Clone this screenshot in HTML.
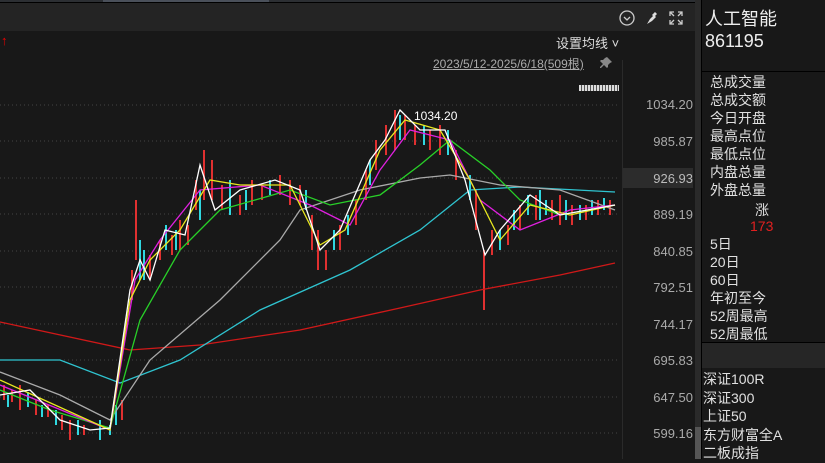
<!DOCTYPE html><html><head><meta charset="utf-8"><style>
body{margin:0;width:825px;height:459px;background:#181818;overflow:hidden;position:relative;font-family:"Liberation Sans","Noto Sans CJK SC",sans-serif;color:#ddd}
.a{position:absolute}
.ax{position:absolute;right:132px;font-size:13px;color:#aaa;text-align:right}
.r{position:absolute;left:710px;font-size:14px;color:#e0e0e0;line-height:18px}
</style></head><body>
<div class="a" style="left:0;top:0;width:695px;height:2px;background:#2c2f33"></div>
<div class="a" style="left:103px;top:0;width:166px;height:2px;background:#4a505a"></div>
<div class="a" style="left:0;top:2px;width:695px;height:1px;background:#000"></div>
<div class="a" style="left:0;top:3px;width:695px;height:28px;background:#242424"></div>
<svg class="a" style="left:618px;top:9px" width="75" height="18" viewBox="0 0 75 18">
<circle cx="9" cy="9" r="7" fill="none" stroke="#ccc" stroke-width="1.3"/><path d="M6 8l3 3 3-3" fill="none" stroke="#ccc" stroke-width="1.3"/>
<path d="M29 15l3-5 4-4 2 2-4 4z" fill="#ddd"/><path d="M34 6l3-3 2 2-3 3z" fill="#ddd"/>
<path d="M52 7V3h4M60 3h4v4M64 11v4h-4M56 15h-4v-4M52 3l4 4M64 3l-4 4M64 15l-4-4M52 15l4-4" fill="none" stroke="#ccc" stroke-width="1.3"/>
</svg>
<div class="a" style="left:556px;top:33px;font-size:13px;color:#ddd">设置均线 ˅</div>
<div class="a" style="left:433px;top:55px;font-size:12px;color:#aaa;text-decoration:underline">2023/5/12-2025/6/18(509根)</div>
<svg class="a" style="left:600px;top:56px" width="13" height="13" viewBox="0 0 13 13"><path d="M7 1l5 5-2 1-2 2 0 2-1 1-3-3-3 3-1 0 0-1 3-3-3-3 1-1 2 0 2-2z" fill="#888"/></svg>
<div class="a" style="left:579px;top:85px;width:40px;height:6px;background:repeating-linear-gradient(90deg,#ddd 0 2px,#555 2px 3px)"></div>
<div class="a" style="left:1px;top:33px;color:#e00;font-size:13px">↑</div>
<div class="a" style="left:622px;top:60px;width:1px;height:399px;background:#2a2a2a"></div>
<div class="a" style="left:623px;top:168px;width:70px;height:20px;background:#2c2c2c"></div>
<div class="ax" style="top:97px">1034.20</div><div class="ax" style="top:134px">985.87</div>
<div class="ax" style="top:171px;color:#bbb">926.93</div><div class="ax" style="top:207px">889.19</div>
<div class="ax" style="top:244px">840.85</div><div class="ax" style="top:280px">792.51</div>
<div class="ax" style="top:317px">744.17</div><div class="ax" style="top:353px">695.83</div>
<div class="ax" style="top:390px">647.50</div><div class="ax" style="top:426px">599.16</div>
<svg class="a" style="left:0;top:0" width="625" height="459">
<g stroke="#444" stroke-dasharray="1 3">
<line x1="0" y1="105" x2="620" y2="105"/><line x1="0" y1="141" x2="620" y2="141"/><line x1="0" y1="178" x2="620" y2="178"/><line x1="0" y1="214" x2="620" y2="214"/><line x1="0" y1="251" x2="620" y2="251"/><line x1="0" y1="287" x2="620" y2="287"/><line x1="0" y1="324" x2="620" y2="324"/><line x1="0" y1="360" x2="620" y2="360"/><line x1="0" y1="397" x2="620" y2="397"/><line x1="0" y1="433" x2="620" y2="433"/></g>
<g stroke-width="2">
<path stroke="#e03030" d="M4 385v15M12 390v12M20 385v25M36 400v15M48 405v12M62 415v15M70 420v20M84 425v10M122 400v20M132 270v30M136 200v60M150 255v25M160 240v20M172 235v20M180 220v30M188 225v20M196 180v30M204 150v50M212 160v40M222 185v25M240 195v20M252 180v25M262 185v15M280 175v20M290 180v25M300 185v20M312 215v35M318 230v40M326 250v20M340 225v25M356 200v25M366 170v30M376 140v30M386 125v30M395 110v40M405 115v25M415 125v20M430 130v20M440 125v30M456 150v30M476 190v40M484 250v60M492 230v25M508 225v20M520 205v25M536 195v25M552 200v20M560 195v30M572 205v20M586 205v15M598 200v15M610 200v15"/>
<path stroke="#30d8e0" d="M8 395v12M28 392v15M42 405v12M56 410v15M78 420v15M100 420v20M110 425v10M116 405v20M140 240v40M144 250v30M166 225v25M176 230v20M200 190v30M230 180v35M246 190v20M270 180v15M306 190v20M334 230v20M348 215v20M370 160v25M400 115v25M424 125v20M448 130v25M470 175v25M500 230v20M514 210v20M528 195v20M540 190v30M546 200v15M566 200v20M580 205v15M592 200v15M604 198v12"/>
</g>
<g fill="none" stroke-width="1.3">
<polyline stroke="#d01818" points="0,322 130,350 200,345 300,330 400,308 480,290 560,275 615,263"/>
<polyline stroke="#2fc4d0" points="0,360 60,360 120,383 180,360 260,310 350,270 420,230 470,190 520,187 615,192"/>
<polyline stroke="#aaa" points="0,372 60,395 110,420 150,360 220,300 280,240 300,210 360,190 420,178 450,175 500,185 560,190 615,210"/>
<polyline stroke="#28d028" points="0,390 50,410 110,428 140,320 180,250 220,210 290,190 330,205 380,195 420,165 450,140 490,170 520,200 560,215 615,205"/>
<polyline stroke="#e020e0" points="0,385 110,430 135,280 160,240 200,190 260,185 310,205 350,225 380,170 410,130 450,140 480,200 520,230 570,210 615,205"/>
<polyline stroke="#e8e820" points="0,380 110,430 130,300 150,260 180,230 210,180 240,185 290,185 320,245 345,230 380,150 405,120 440,130 470,180 500,240 530,205 570,215 615,205"/>
<polyline stroke="#fff" points="0,395 30,390 60,420 90,430 110,428 130,290 140,260 150,280 165,230 185,235 200,165 215,210 240,190 275,180 300,190 320,250 340,230 370,160 385,140 400,110 420,130 445,130 465,180 485,255 500,230 530,195 560,215 615,205"/>
</g>
<text x="414" y="120" fill="#fff" font-size="12" font-family="Liberation Sans">1034.20</text>
</svg>
<div class="a" style="left:695px;top:0;width:6px;height:459px;background:#2a2a2a"></div>
<div class="a" style="left:695px;top:427px;width:6px;height:32px;background:#555"></div>
<div class="a" style="left:701px;top:0;width:124px;height:459px;background:#181818;border-left:1px solid #000"></div>
<div class="a" style="left:705px;top:8px;font-size:18px;line-height:22px;color:#eee">人工智能<br>861195</div>
<div class="a" style="left:702px;top:71px;width:123px;height:1px;background:#000"></div>
<div class="r" style="top:73px">总成交量<br>总成交额<br>今日开盘<br>最高点位<br>最低点位<br>内盘总量<br>外盘总量</div>
<div class="a" style="left:755px;top:200px;font-size:14px;color:#e0e0e0">涨</div>
<div class="a" style="left:750px;top:218px;font-size:14px;color:#e02020">173</div>
<div class="r" style="top:235px">5日<br>20日<br>60日<br>年初至今<br>52周最高<br>52周最低</div>
<div class="a" style="left:702px;top:342px;width:123px;height:1px;background:#000"></div>
<div class="a" style="left:702px;top:343px;width:123px;height:25px;background:#262626"></div>
<div class="a" style="left:703px;top:370px;font-size:14px;line-height:18.5px;color:#e0e0e0">深证100R<br>深证300<br>上证50<br>东方财富全A<br>二板成指</div>
</body></html>
